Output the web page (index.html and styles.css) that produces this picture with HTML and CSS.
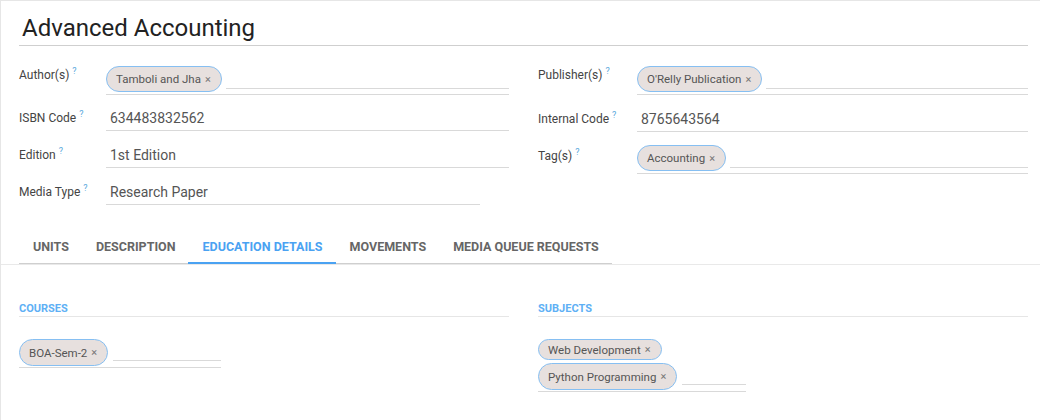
FILE: index.html
```html
<!DOCTYPE html>
<html lang="en">
<head>
<meta charset="utf-8">
<title>Advanced Accounting</title>
<link rel="stylesheet" href="styles.css">
</head>
<body>
<div class="sheet">
  <div class="title-wrap">
    <h1 class="title">Advanced Accounting</h1>
  </div>

  <div class="groups">
    <div class="col col-left">
      <div class="row row-tags">
        <div class="label">Author(s)<sup>?</sup></div>
        <div class="field tags">
          <span class="pill">Tamboli and Jha<span class="x">×</span></span>
          <span class="input"></span>
        </div>
      </div>
      <div class="row row-text">
        <div class="label">ISBN Code<sup>?</sup></div>
        <div class="field text">634483832562</div>
      </div>
      <div class="row row-text">
        <div class="label">Edition<sup>?</sup></div>
        <div class="field text">1st Edition</div>
      </div>
      <div class="row row-text">
        <div class="label">Media Type<sup>?</sup></div>
        <div class="field text short">Research Paper</div>
      </div>
    </div>

    <div class="col col-right">
      <div class="row row-tags">
        <div class="label">Publisher(s)<sup>?</sup></div>
        <div class="field tags">
          <span class="pill">O'Relly Publication<span class="x">×</span></span>
          <span class="input"></span>
        </div>
      </div>
      <div class="row row-text">
        <div class="label">Internal Code<sup>?</sup></div>
        <div class="field text">8765643564</div>
      </div>
      <div class="row row-tags row-tags2">
        <div class="label">Tag(s)<sup>?</sup></div>
        <div class="field tags">
          <span class="pill">Accounting<span class="x">×</span></span>
          <span class="input"></span>
        </div>
      </div>
    </div>
  </div>

  <div class="tabs-wrap">
    <ul class="tabs">
      <li class="tab">UNITS</li>
      <li class="tab">DESCRIPTION</li>
      <li class="tab active">EDUCATION DETAILS</li>
      <li class="tab">MOVEMENTS</li>
      <li class="tab">MEDIA QUEUE REQUESTS</li>
    </ul>
  </div>

  <div class="tab-content">
    <div class="section">
      <div class="section-title">COURSES</div>
      <div class="m2m m2m-courses">
        <span class="pill pill-lg">BOA-Sem-2<span class="x">×</span></span>
        <span class="input"></span>
      </div>
    </div>
    <div class="section">
      <div class="section-title">SUBJECTS</div>
      <div class="m2m m2m-subjects">
        <span class="pill pill-sm">Web Development<span class="x">×</span></span>
        <span class="pill pill-lg">Python Programming<span class="x">×</span></span>
        <span class="input input-sm"></span>
      </div>
    </div>
  </div>
</div>
</body>
</html>
```

FILE: styles.css
```css
* { box-sizing: border-box; }

body {
  margin: 0;
  background: #fff;
  font-family: Roboto, "Noto Sans", "Liberation Sans", sans-serif;
  color: #444;
}

.sheet {
  height: 420px;
  border-top: 1px solid #e6e6e6;
  border-left: 1px solid #e6e6e6;
  overflow: hidden;
}

/* Title */
.title-wrap {
  padding: 0 12px 0 18px;
}

.title {
  margin: 0;
  padding: 12px 0 2px 3px;
  font-size: 24px;
  line-height: 30px;
  font-weight: 400;
  color: #222;
  border-bottom: 1px solid #cfcfcf;
}

/* Groups */
.groups {
  margin-top: 18px;
  padding: 0 12px 0 18px;
  display: grid;
  grid-template-columns: 490px 490px;
  column-gap: 29px;
}

.col {
  display: flex;
  flex-direction: column;
  gap: 11px;
}

.row {
  display: flex;
  align-items: flex-start;
}

.col-left .row-tags { margin-bottom: -1px; }

.label {
  width: 87px;
  flex: none;
  font-size: 12px;
  line-height: 18px;
  color: #444;
  padding-top: 4px;
}

.col-right .label { width: 99px; }

.label sup {
  font-size: 9px;
  color: #5aa8dc;
  margin-left: 3px;
  vertical-align: 5px;
  line-height: 0;
}

.row-tags .label { padding-top: 2px; }
.row-tags2 .label { padding-top: 4px; }

.field {
  flex: 1;
  border-bottom: 1px solid #d9d9d9;
}

.field.text {
  height: 26px;
  padding-left: 4px;
  font-size: 14px;
  line-height: 26px;
  color: #555;
}

.field.short {
  flex: none;
  width: 374px;
}

.field.tags {
  height: 31px;
  padding-top: 2px;
  display: flex;
  align-items: flex-start;
}

.pill {
  display: inline-flex;
  align-items: center;
  height: 26px;
  padding: 0 10px 0 9px;
  border: 1.5px solid #86bff2;
  border-radius: 14px;
  background: #e7e0de;
  font-size: 11.5px;
  color: #555;
  white-space: nowrap;
  flex: none;
}

.pill .x {
  margin-left: 4px;
  font-size: 11px;
  color: #777;
}

.input {
  flex: 1;
  height: 23px;
  margin-left: 4px;
  border-bottom: 1px solid #d9d9d9;
}

/* Tabs */
.tabs-wrap {
  margin-top: 25px;
  padding-left: 18px;
  border-bottom: 1px solid #e9e9e9;
}

.tabs {
  list-style: none;
  margin: 0;
  padding: 0;
  display: inline-flex;
  border-bottom: 1px solid #cfcfcf;
}

.tab {
  height: 33px;
  padding: 0 13px 0 14px;
  font-size: 12.5px;
  font-weight: 700;
  line-height: 33px;
  color: #666;
}

.tab.active {
  color: #4aa2f2;
  border-bottom: 2px solid #4aa2f2;
  margin-bottom: -1px;
  height: 34px;
}

/* Tab content */
.tab-content {
  margin-top: 37px;
  padding: 0 12px 0 18px;
  display: grid;
  grid-template-columns: 490px 490px;
  column-gap: 29px;
}

.section-title {
  font-size: 11px;
  font-weight: 700;
  line-height: 14px;
  color: #5eb0f5;
  padding-bottom: 0;
  border-bottom: 1px solid #e6e6e6;
}

.m2m {
  margin-top: 22px;
  display: flex;
  flex-wrap: wrap;
  align-items: flex-end;
  row-gap: 3px;
  border-bottom: 1px solid #d9d9d9;
  padding-bottom: 1px;
}

.m2m-courses { width: 202px; }
.m2m-subjects { width: 208px; }

.pill-lg { height: 27px; }
.pill-sm { height: 21px; margin-right: 60px; }

.m2m .input {
  flex: 1;
  margin-left: 5px;
  margin-bottom: 5px;
  align-self: flex-end;
  height: 1px;
}
```
